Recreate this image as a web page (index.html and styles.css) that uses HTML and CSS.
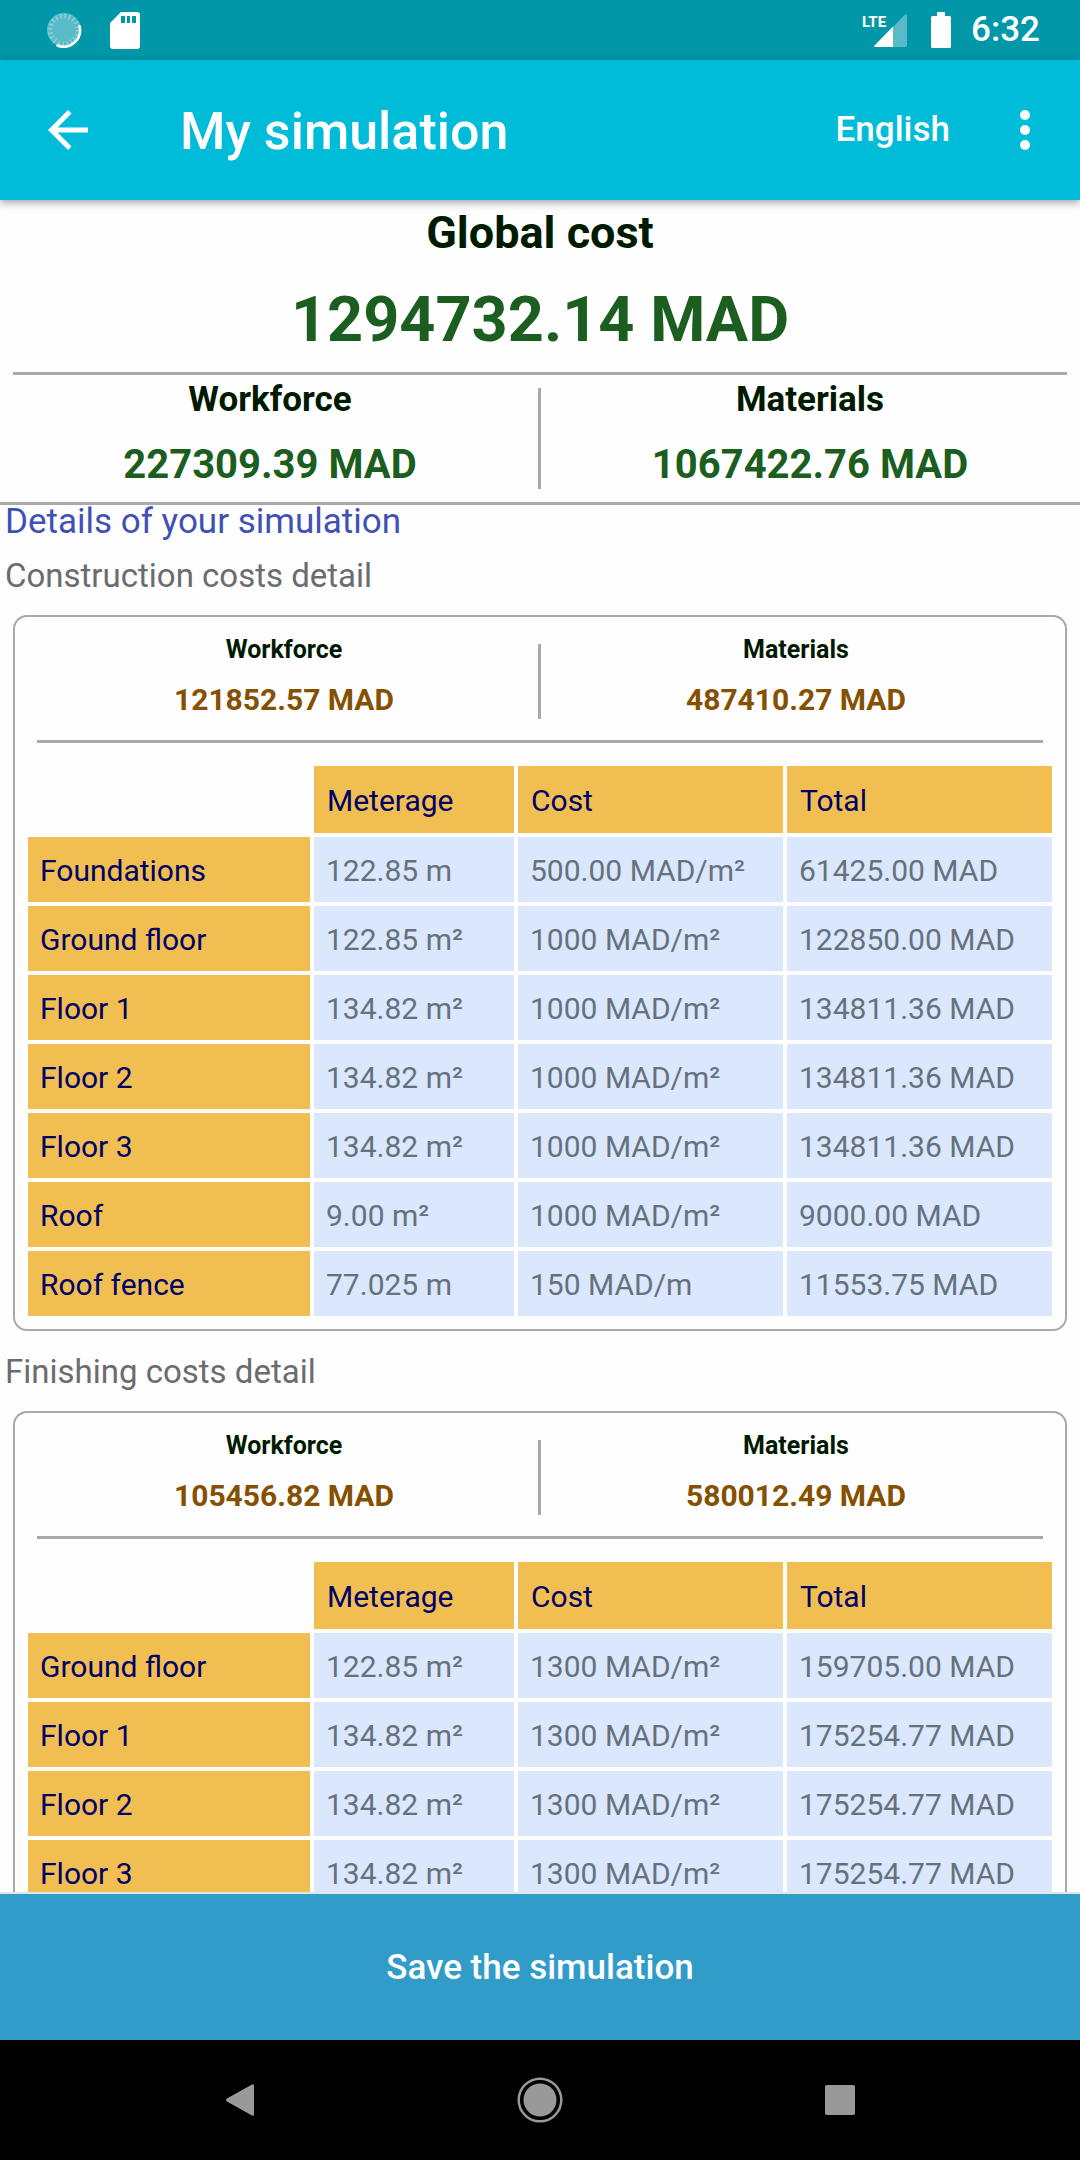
FILE: index.html
```html
<!DOCTYPE html>
<html lang="en">
<head>
<meta charset="utf-8">
<meta name="viewport" content="width=device-width, initial-scale=1">
<title>My simulation</title>
<link rel="stylesheet" href="styles.css">
</head>
<body>
<div class="status-bar">
  <div class="status-group status-left">
    <svg width="36" height="36" viewBox="0 0 36 36" aria-hidden="true">
      <circle cx="18" cy="18" r="17" fill="#fff" fill-opacity=".35"/>
      <circle cx="18" cy="18" r="14" fill="none" stroke="#fff" stroke-opacity=".3" stroke-width="5" stroke-dasharray="1.6 2.8"/>
      <path d="M33.500 14a16.500 16.500 0 0 1-22 19.500" fill="none" stroke="#fff" stroke-width="2.500" stroke-linecap="round"/>
    </svg>
    <svg width="30" height="37" viewBox="0 0 30 37" aria-hidden="true">
      <path fill="#fff" fill-rule="evenodd" d="M11 0h16a3 3 0 0 1 3 3v31a3 3 0 0 1-3 3H3a3 3 0 0 1-3-3V11zM11 4v7h4V4zM17 4v7h3V4zM22 4v7h4V4z"/>
    </svg>
  </div>
  <div class="status-group status-right">
    <div class="signal">
      <span class="network">LTE</span>
      <svg width="33" height="33" viewBox="0 0 33 33" aria-hidden="true">
        <path fill="#fff" fill-opacity=".35" d="M19 13L30.500 1Q33-1 33 2V31a2 2 0 0 1-2 2H19z"/>
        <path fill="#fff" d="M19 12.500V33H1.500Q-1 33 1 31z"/>
      </svg>
    </div>
    <svg width="20" height="36" viewBox="0 0 20 36" aria-hidden="true">
      <path fill="#fff" d="M6 0h8v4h4.500A1.500 1.500 0 0 1 20 5.500v29a1.500 1.500 0 0 1-1.500 1.500h-17A1.500 1.500 0 0 1 0 34.500v-29A1.500 1.500 0 0 1 1.500 4H6z"/>
    </svg>
    <time class="clock">6:32</time>
  </div>
</div>

<header class="app-bar">
  <button class="icon-button" type="button" aria-label="Back">
    <svg width="60" height="60" viewBox="0 0 24 24" aria-hidden="true"><path fill="#fff" d="M20 11H7.830l5.590-5.590L12 4l-8 8 8 8 1.410-1.410L7.830 13H20z"/></svg>
  </button>
  <h1 class="title">My simulation</h1>
  <button class="language" type="button">English</button>
  <button class="icon-button" type="button" aria-label="More options">
    <svg width="60" height="60" viewBox="0 0 24 24" aria-hidden="true"><g fill="#fff"><circle cx="12" cy="6" r="2"/><circle cx="12" cy="12" r="2"/><circle cx="12" cy="18" r="2"/></g></svg>
  </button>
</header>

<main class="content">
  <section class="summary">
    <h2 class="summary-title">Global cost</h2>
    <p class="summary-total">1294732.14 MAD</p>
    <hr class="rule rule-summary">
    <div class="split split-large">
      <div class="split-item"><h3 class="label">Workforce</h3><p class="amount">227309.39 MAD</p></div>
      <div class="split-item"><h3 class="label">Materials</h3><p class="amount">1067422.76 MAD</p></div>
    </div>
  </section>

  <h2 class="details-title">Details of your simulation</h2>

  <h3 class="section-title">Construction costs detail</h3>
  <section class="card">
    <div class="split split-small">
      <div class="split-item"><h4 class="label">Workforce</h4><p class="amount">121852.57 MAD</p></div>
      <div class="split-item"><h4 class="label">Materials</h4><p class="amount">487410.27 MAD</p></div>
    </div>
    <hr class="rule rule-card">
    <table class="costs">
      <colgroup><col class="col-name"><col class="col-meterage"><col><col></colgroup>
      <thead><tr><td class="corner"></td><th scope="col">Meterage</th><th scope="col">Cost</th><th scope="col">Total</th></tr></thead>
      <tbody>
        <tr><th scope="row">Foundations</th><td>122.85 m</td><td>500.00 MAD/m²</td><td>61425.00 MAD</td></tr>
        <tr><th scope="row">Ground floor</th><td>122.85 m²</td><td>1000 MAD/m²</td><td>122850.00 MAD</td></tr>
        <tr><th scope="row">Floor 1</th><td>134.82 m²</td><td>1000 MAD/m²</td><td>134811.36 MAD</td></tr>
        <tr><th scope="row">Floor 2</th><td>134.82 m²</td><td>1000 MAD/m²</td><td>134811.36 MAD</td></tr>
        <tr><th scope="row">Floor 3</th><td>134.82 m²</td><td>1000 MAD/m²</td><td>134811.36 MAD</td></tr>
        <tr><th scope="row">Roof</th><td>9.00 m²</td><td>1000 MAD/m²</td><td>9000.00 MAD</td></tr>
        <tr><th scope="row">Roof fence</th><td>77.025 m</td><td>150 MAD/m</td><td>11553.75 MAD</td></tr>
      </tbody>
    </table>
  </section>

  <h3 class="section-title">Finishing costs detail</h3>
  <section class="card">
    <div class="split split-small">
      <div class="split-item"><h4 class="label">Workforce</h4><p class="amount">105456.82 MAD</p></div>
      <div class="split-item"><h4 class="label">Materials</h4><p class="amount">580012.49 MAD</p></div>
    </div>
    <hr class="rule rule-card">
    <table class="costs">
      <colgroup><col class="col-name"><col class="col-meterage"><col><col></colgroup>
      <thead><tr><td class="corner"></td><th scope="col">Meterage</th><th scope="col">Cost</th><th scope="col">Total</th></tr></thead>
      <tbody>
        <tr><th scope="row">Ground floor</th><td>122.85 m²</td><td>1300 MAD/m²</td><td>159705.00 MAD</td></tr>
        <tr><th scope="row">Floor 1</th><td>134.82 m²</td><td>1300 MAD/m²</td><td>175254.77 MAD</td></tr>
        <tr><th scope="row">Floor 2</th><td>134.82 m²</td><td>1300 MAD/m²</td><td>175254.77 MAD</td></tr>
        <tr><th scope="row">Floor 3</th><td>134.82 m²</td><td>1300 MAD/m²</td><td>175254.77 MAD</td></tr>
      </tbody>
    </table>
  </section>
</main>

<button class="save" type="button">Save the simulation</button>

<nav class="system-nav" aria-label="System">
  <button class="nav-button" type="button" aria-label="Back">
    <svg width="60" height="60" viewBox="0 0 60 60" aria-hidden="true"><path fill="#999" d="M42 14.500q2-1 2 1.500v28q0 2.500-2 1.500L17 31.500q-2-1.500 0-3z"/></svg>
  </button>
  <button class="nav-button" type="button" aria-label="Home">
    <svg width="60" height="60" viewBox="0 0 60 60" aria-hidden="true"><circle cx="30" cy="30" r="16.500" fill="#999"/><circle cx="30" cy="30" r="21.300" fill="none" stroke="#999" stroke-width="2.500"/></svg>
  </button>
  <button class="nav-button" type="button" aria-label="Recent apps">
    <svg width="60" height="60" viewBox="0 0 60 60" aria-hidden="true"><rect x="15" y="15" width="30" height="30" rx="2" fill="#999"/></svg>
  </button>
</nav>
</body>
</html>
```
FILE: styles.css
```css
* {
  box-sizing: border-box;
}

body {
  display: flex;
  flex-direction: column;
  height: 100vh;
  margin: 0;
  background: #fefefe;
  color: #6a6c6f;
  font-family: Roboto, "Liberation Sans", sans-serif;
}

h1, h2, h3, h4, p {
  margin: 0;
}

button {
  margin: 0;
  padding: 0;
  border: 0;
  background: none;
  color: inherit;
  font: inherit;
  cursor: pointer;
}

svg {
  display: block;
}

/* Status bar */
.status-bar {
  display: flex;
  flex: none;
  justify-content: space-between;
  align-items: center;
  height: 60px;
  padding: 0 40px 0 46px;
  background: #0097a9;
  color: #fff;
}

.status-group {
  display: flex;
  align-items: center;
}

.status-left {
  gap: 28px;
}

.status-right {
  gap: 20px;
}

.signal {
  display: flex;
  align-items: flex-end;
  margin-right: 4px;
}

.network {
  align-self: flex-start;
  margin-right: -12px;
  font-size: 15px;
  font-weight: bold;
  line-height: 16px;
}

.clock {
  font-size: 35px;
  font-weight: 500;
  line-height: 40px;
}

/* App bar */
.app-bar {
  position: relative;
  z-index: 1;
  display: flex;
  flex: none;
  align-items: center;
  height: 140px;
  padding: 0 25px 0 38px;
  background: #00bcd9;
  box-shadow: 0 3px 8px rgba(0, 0, 0, .35);
  color: #fff;
}

.title {
  flex: 1;
  margin-left: 82px;
  padding-top: 4px;
  font-size: 52px;
  font-weight: 500;
  line-height: 60px;
}

.language {
  margin-right: 45px;
  font-size: 35px;
  font-weight: 500;
  line-height: 40px;
}

/* Scrolling content */
.content {
  flex: 1;
  min-height: 0;
  overflow-y: auto;
  scrollbar-width: none;
}

.rule {
  height: 3px;
  border: 0;
  background: #a9a9a9;
}

.summary {
  padding-top: 3px;
  border-bottom: 3px solid #a9a9a9;
  text-align: center;
}

.summary-title {
  color: #001a00;
  font-size: 45px;
  line-height: 60px;
}

.summary-total {
  margin-top: 15px;
  color: #1b5e20;
  font-size: 63px;
  font-weight: bold;
  line-height: 84px;
}

.rule-summary {
  margin: 10px 13px 0;
}

.split {
  display: grid;
  grid-template-columns: 1fr 1fr;
  position: relative;
  text-align: center;
}

/* Vertical rule between the two amounts */
.split::after {
  content: "";
  position: absolute;
  left: 50%;
  width: 3px;
  margin-left: -2px;
  background: #a9a9a9;
}

.split-large {
  padding-bottom: 10px;
}

.split-large::after {
  top: 13px;
  bottom: 13px;
}

.split .label {
  color: #001a00;
}

.split-large .label {
  font-size: 35px;
  line-height: 50px;
}

.split-large .amount {
  margin-top: 13px;
  color: #1b5e20;
  font-size: 40px;
  font-weight: bold;
  line-height: 54px;
}

.details-title {
  padding-left: 5px;
  color: #3f51b5;
  font-size: 35px;
  font-weight: normal;
  line-height: 34px;
}

.section-title {
  margin-top: 21px;
  padding-left: 5px;
  font-size: 33px;
  font-weight: normal;
  line-height: 40px;
}

.details-title + .section-title {
  margin-top: 17px;
}

.card {
  margin: 19px 13px 0;
  padding: 13px;
  border: 2px solid #a9a9a9;
  border-radius: 14px;
}

.split-small {
  padding-bottom: 20px;
}

.split-small::after {
  top: 14px;
  bottom: 21px;
}

.rule-card {
  margin: 0 9px 19px;
}

.split-small .label {
  font-size: 25px;
  line-height: 40px;
}

.split-small .amount {
  margin-top: 10px;
  color: #855000;
  font-size: 30px;
  font-weight: bold;
  line-height: 40px;
}

/* Cost tables: the side margins absorb the outer cell spacing */
.costs {
  width: calc(100% + 8px);
  margin: 0 -4px -4px;
  border-collapse: separate;
  border-spacing: 4px;
  table-layout: fixed;
  font-size: 30px;
  line-height: 35px;
}

.col-name {
  width: 282px;
}

.col-meterage {
  width: 200px;
}

.costs th,
.costs td {
  padding: 16px 12px 14px;
  background: #dae7fd;
  color: #66717e;
  font-weight: normal;
  text-align: left;
}

.costs th {
  background: #f1bf51;
  color: #000066;
}

.costs thead th {
  padding: 17px 13px 15px;
}

.costs .corner {
  background: none;
}

.save {
  flex: none;
  height: 148px;
  border-top: 2px solid #e2e6e8;
  background: #319cc8;
  color: #fff;
  font-size: 35px;
  font-weight: 500;
}

/* System navigation */
.system-nav {
  display: grid;
  flex: none;
  grid-template-columns: repeat(3, 1fr);
  height: 120px;
  padding: 0 90px;
  background: #000;
}

.nav-button {
  display: grid;
  place-items: center;
}
```
